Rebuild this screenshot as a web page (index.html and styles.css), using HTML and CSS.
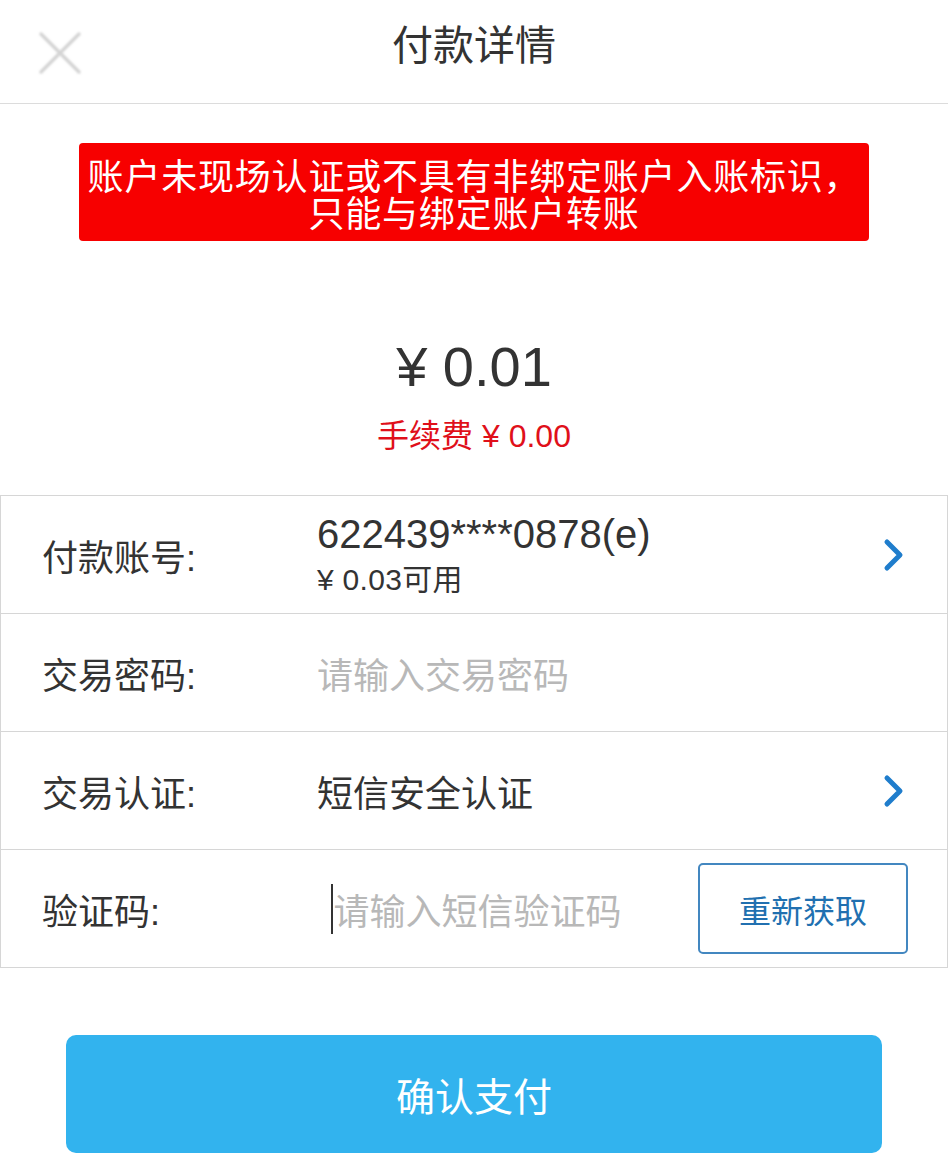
FILE: index.html
```
<!DOCTYPE html>
<html lang="zh-CN">
<head>
<meta charset="utf-8">
<title>付款详情</title>
<link rel="stylesheet" href="styles.css">
</head>
<body>
<header class="topbar">
  <div class="close">
    <svg width="44" height="44" viewBox="0 0 44 44"><path d="M3 3 L41 41 M41 3 L3 41" stroke="#d4d4d4" stroke-width="3.5" stroke-linecap="round" fill="none"/></svg>
  </div>
  <h1 class="title">付款详情</h1>
  <div></div>
</header>

<div class="banner">账户未现场认证或不具有非绑定账户入账标识，<br>只能与绑定账户转账</div>

<div class="amount">¥ 0.01</div>
<div class="fee">手续费 ¥ 0.00</div>

<div class="list">
  <div class="row">
    <div class="label">付款账号:</div>
    <div class="value account">
      <div class="acc-no">622439****0878(e)</div>
      <div class="acc-bal">¥ 0.03可用</div>
    </div>
    <svg class="chev" width="24" height="34" viewBox="0 0 24 34"><path d="M5 4 L18 17 L5 30" stroke="#1f7dcc" stroke-width="5" stroke-linecap="round" stroke-linejoin="round" fill="none"/></svg>
  </div>
  <div class="row">
    <div class="label">交易密码:</div>
    <div class="value placeholder">请输入交易密码</div>
  </div>
  <div class="row">
    <div class="label">交易认证:</div>
    <div class="value">短信安全认证</div>
    <svg class="chev" width="24" height="34" viewBox="0 0 24 34"><path d="M5 4 L18 17 L5 30" stroke="#1f7dcc" stroke-width="5" stroke-linecap="round" stroke-linejoin="round" fill="none"/></svg>
  </div>
  <div class="row">
    <div class="label">验证码:</div>
    <div class="value sms"><span class="caret"></span><span class="placeholder">请输入短信验证码</span></div>
    <div class="resend">重新获取</div>
  </div>
</div>

<div class="confirm">确认支付</div>
</body>
</html>
```

FILE: styles.css
```
html, body {
  margin: 0;
  padding: 0;
  background: #fff;
}
body {
  font-family: "Liberation Sans", "Noto Sans CJK SC", sans-serif;
  color: #333;
  width: 948px;
}
.topbar {
  height: 103px;
  border-bottom: 1px solid #dcdcdc;
  display: grid;
  grid-template-columns: 1fr auto 1fr;
  align-items: center;
}
.close {
  padding-left: 38px;
  padding-top: 2px;
  display: flex;
  filter: blur(0.8px);
}
.title {
  margin: 0;
  font-size: 41px;
  font-weight: normal;
  color: #333;
  line-height: 1;
  padding-bottom: 10px;
}
.banner {
  margin: 39px 79px 0;
  height: 98px;
  box-sizing: border-box;
  padding-top: 16px;
  background: #f70000;
  border-radius: 4px;
  color: #fff;
  font-size: 36px;
  line-height: 37px;
  text-align: center;
  letter-spacing: 0.8px;
  white-space: nowrap;
}
.amount {
  margin-top: 94px;
  text-align: center;
  font-size: 56px;
  line-height: 64px;
  color: #333;
}
.fee {
  margin-top: 19px;
  text-align: center;
  font-size: 32px;
  line-height: 36px;
  color: #e0101a;
}
.list {
  margin-top: 41px;
  border: 1px solid #d6d6d6;
  border-bottom: none;
}
.row {
  height: 117px;
  border-bottom: 1px solid #d6d6d6;
  display: flex;
  align-items: center;
  padding: 0 41px;
}
.label {
  width: 275px;
  flex: none;
  font-size: 36px;
  color: #333;
}
.value {
  flex: 1;
  font-size: 36px;
  color: #333;
}
.placeholder {
  color: #b8b8b8;
}
.account {
  display: flex;
  flex-direction: column;
  gap: 6px;
  padding-bottom: 2px;
}
.acc-no {
  font-size: 40px;
  line-height: 46px;
}
.acc-bal {
  font-size: 30px;
  line-height: 34px;
  letter-spacing: 0.3px;
}
.chev {
  flex: none;
}
.sms {
  display: flex;
  align-items: center;
  padding-left: 14px;
}
.caret {
  width: 1.5px;
  height: 50px;
  background: #333;
  margin-right: 1px;
}
.resend {
  flex: none;
  width: 206px;
  height: 87px;
  margin-right: -2px;
  border: 2px solid #4387c0;
  border-radius: 5px;
  display: flex;
  align-items: center;
  justify-content: center;
  color: #2170b0;
  font-size: 32px;
}
.confirm {
  margin: 67px 66px 0;
  height: 118px;
  background: #32b3ee;
  border-radius: 10px;
  display: flex;
  align-items: center;
  justify-content: center;
  color: #fff;
  font-size: 39px;
}
```
